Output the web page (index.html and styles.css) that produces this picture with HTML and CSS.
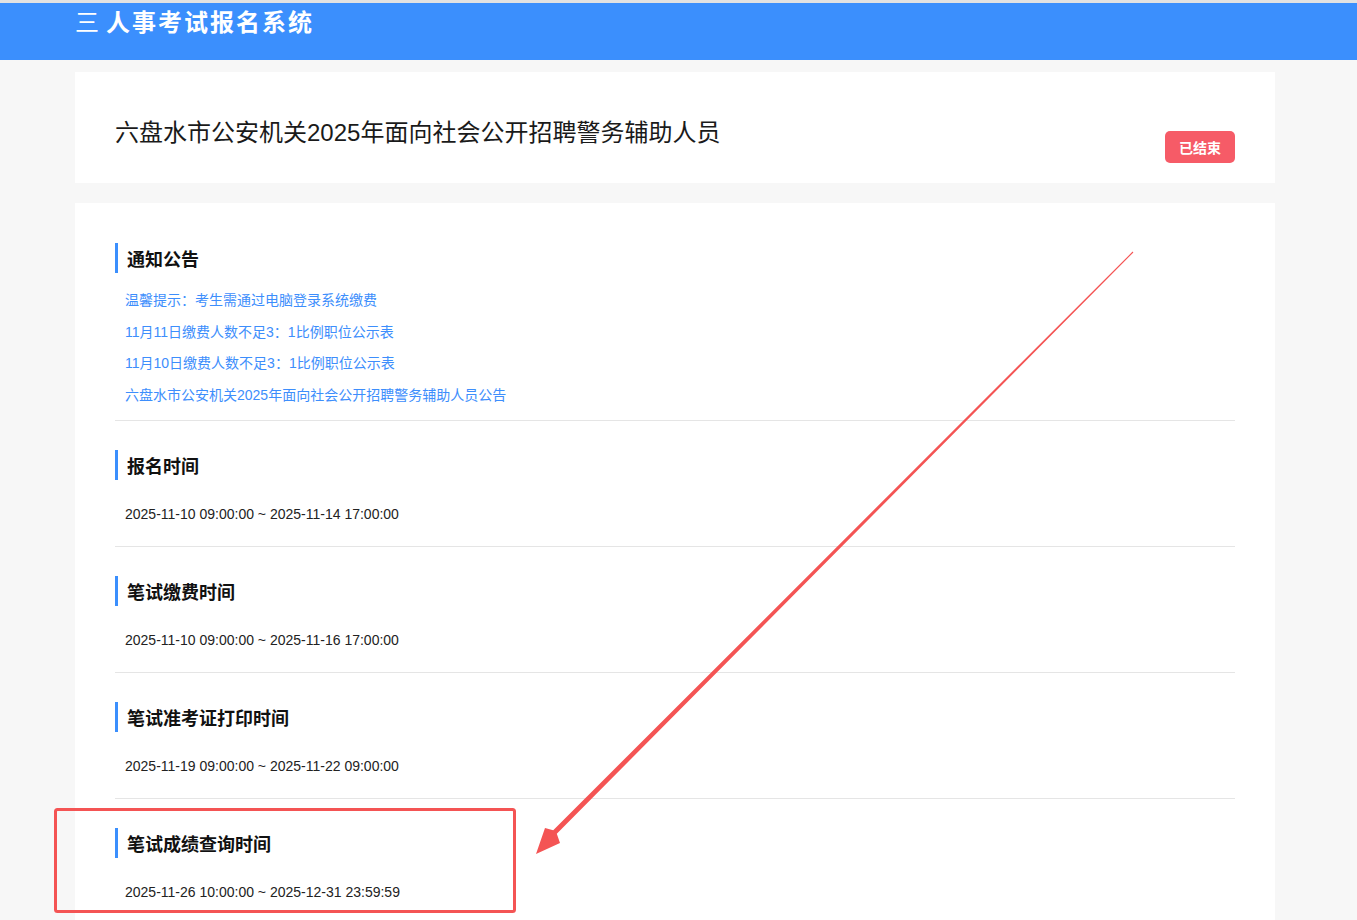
FILE: index.html
```html
<!DOCTYPE html>
<html lang="zh-CN">
<head>
  <meta charset="UTF-8" />
  <meta name="viewport" content="width=device-width, initial-scale=1" />
  <title>人事考试报名系统</title>
  <link rel="stylesheet" href="styles.css">
</head>
<body>

<header class="topbar">
  <div class="wrap">
    <span class="menu-icon">三</span>
    <span class="brand">人事考试报名系统</span>
  </div>
</header>

<div class="wrap">

  <div class="card exam-head">
    <h1 class="exam-title">六盘水市公安机关2025年面向社会公开招聘警务辅助人员</h1>
    <span class="badge">已结束</span>
  </div>

  <div class="card detail">

    <section class="block block-notice">
      <h2 class="block-title">通知公告</h2>
      <ul class="notice-list">
        <li><a href="#">温馨提示：考生需通过电脑登录系统缴费</a></li>
        <li><a href="#">11月11日缴费人数不足3：1比例职位公示表</a></li>
        <li><a href="#">11月10日缴费人数不足3：1比例职位公示表</a></li>
        <li><a href="#">六盘水市公安机关2025年面向社会公开招聘警务辅助人员公告</a></li>
      </ul>
    </section>

    <section class="block">
      <h2 class="block-title">报名时间</h2>
      <p class="time">2025-11-10 09:00:00 ~ 2025-11-14 17:00:00</p>
    </section>

    <section class="block">
      <h2 class="block-title">笔试缴费时间</h2>
      <p class="time">2025-11-10 09:00:00 ~ 2025-11-16 17:00:00</p>
    </section>

    <section class="block">
      <h2 class="block-title">笔试准考证打印时间</h2>
      <p class="time">2025-11-19 09:00:00 ~ 2025-11-22 09:00:00</p>
    </section>

    <section class="block">
      <h2 class="block-title">笔试成绩查询时间</h2>
      <p class="time">2025-11-26 10:00:00 ~ 2025-12-31 23:59:59</p>
    </section>

  </div>
</div>

<!-- 截图标注 -->
<svg class="markup" width="1357" height="920" viewBox="0 0 1357 920">
  <rect x="55.5" y="809.5" width="459" height="102" rx="2" fill="none" stroke="#f45454" stroke-width="3"/>
  <polygon fill="#f45454" points="1132.6,251.6 1133.4,252.4 556.8,833.8 560,843 536,854 545,828 553.2,830.2"/>
</svg>

</body>
</html>
```

FILE: styles.css
```css
body {
  margin: 0; padding: 0;
  font-family: "Liberation Sans", "Noto Sans CJK SC", sans-serif;
  background-color: #f7f7f7;
  color: #222;
  border-top: 3px solid #e2e2e2;
  position: relative;
}
.wrap {
  width: 1200px;
  margin-left: 75px;
}
.topbar {
  background-color: #3b8ffd;
  height: 57px;
  color: #fff;
}
.topbar .wrap {
  display: flex;
  align-items: center;
  height: 34px;
  font-size: 24px;
  font-weight: bold;
  letter-spacing: 2px;
  font-family: "Noto Sans CJK SC", sans-serif;
}
.menu-icon {
  font-weight: normal;
  margin-right: 5px;
}
.card {
  background: #fff;
}
.exam-head {
  margin-top: 12px;
  padding: 43px 40px 20px;
  display: flex;
  justify-content: space-between;
  align-items: flex-start;
}
.exam-title {
  margin: 0;
  font-size: 24px;
  font-weight: normal;
  line-height: 36px;
  color: #1a1a1a;
}
.badge {
  margin-top: 16px;
  width: 70px;
  height: 32px;
  line-height: 32px;
  text-align: center;
  background: #f65b67;
  color: #fff;
  font-size: 14px;
  font-weight: bold;
  border-radius: 5px;
  font-family: "Noto Sans CJK SC", sans-serif;
}
.detail {
  margin-top: 20px;
  padding: 11px 40px 40px;
}
.block {
  padding: 29px 0 22px;
  border-bottom: 1px solid #e5e5e5;
}
.block:last-child {
  border-bottom: none;
}
.block-notice {
  padding-bottom: 9px;
}
.block-title {
  margin: 0;
  border-left: 3px solid #3b8ffd;
  padding-left: 9px;
  height: 30px;
  line-height: 30px;
  font-size: 18px;
  font-weight: bold;
  color: #111;
  font-family: "Noto Sans CJK SC", sans-serif;
}
.notice-list {
  list-style: none;
  margin: 12px 0 0;
  padding-left: 10px;
}
.notice-list li {
  line-height: 31.5px;
  height: 31.5px;
  font-size: 14px;
}
.notice-list a {
  color: #3d8efc;
  text-decoration: none;
}
.time {
  margin: 24px 0 0;
  padding-left: 10px;
  font-size: 14px;
  line-height: 20px;
  color: #222;
}
.markup {
  position: absolute;
  left: 0;
  top: -3px;
  pointer-events: none;
}
```
